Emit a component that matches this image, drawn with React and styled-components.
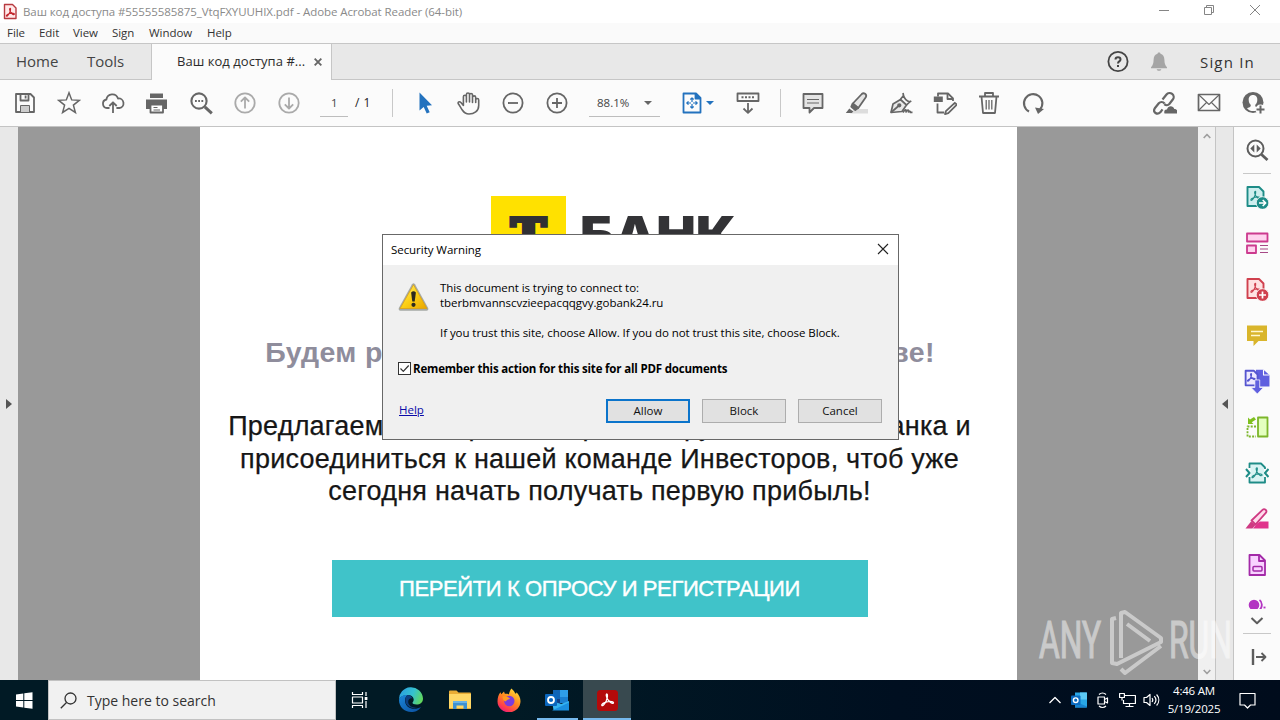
import React from "react";
import styled, { createGlobalStyle, css } from "styled-components";

const Global = createGlobalStyle`
  * { box-sizing: border-box; }
  body { margin: 0; overflow: hidden; background: #fff; }
`;

const Screen = styled.div`
  position: relative;
  display: flex;
  flex-direction: column;
  width: 1280px;
  height: 720px;
  overflow: hidden;
  font-family: "Open Sans", sans-serif;
  font-size: 11.5px;
  color: #222;
`;

/* ---------- window chrome ---------- */
const TitleBar = styled.header`
  display: flex;
  align-items: center;
  height: 23px;
  padding: 0 0 0 3px;
  background: #fff;
  color: #8a8a8a;
  white-space: nowrap;
`;
const TitleText = styled.span`
  flex: 1;
  margin-left: 6px;
  letter-spacing: -0.08px;
`;
const WindowControls = styled.div`
  display: flex;
  margin: 0 2px 3px 0;
  color: #858585;
`;
const WindowControl = styled.div`
  display: flex;
  align-items: center;
  justify-content: center;
  width: 45px;
  height: 20px;
  &:last-child { width: 47px; }
`;
const MenuBar = styled.nav`
  display: flex;
  align-items: center;
  height: 20px;
  padding-left: 7px;
  background: #fafafa;
  color: #333;
  line-height: 20px;
`;
const MenuItem = styled.span`
  width: ${(p) => p.$w}px;
  letter-spacing: -0.05px;
`;

/* ---------- tabs ---------- */
const TabBar = styled.div`
  display: flex;
  align-items: stretch;
  height: 37px;
  border-top: 1px solid #c6c6c6;
  border-bottom: 1px solid #c6c6c6;
  background: #e8e8e8;
  color: #444;
  font-size: 15px;
  line-height: 34px;
`;
const NavTab = styled.span`
  width: ${(p) => p.$w}px;
  padding-left: 16px;
`;
const DocumentTab = styled.div`
  display: flex;
  width: 181px;
  height: 36px;
  padding-left: 25px;
  border: solid #c6c6c6;
  border-width: 0 1px;
  background: #fbfbfb;
  color: #2c2c2c;
  font-size: 13px;
  line-height: 35px;
  white-space: nowrap;
`;
const TabLabel = styled.span`
  width: 137px;
  letter-spacing: 0.04px;
`;
const TabClose = styled.span`
  display: flex;
  align-items: center;
  justify-content: center;
  width: 8px;
`;
const TabActions = styled.div`
  display: flex;
  flex: 1;
  align-items: center;
  justify-content: flex-end;
  padding-right: 25px;
`;
const SignIn = styled.span`
  margin-left: 30px;
  color: #333;
  letter-spacing: 1.2px;
`;
const BellSlot = styled.div`
  display: flex;
  margin-left: 18px;
`;

/* ---------- toolbar ---------- */
const Toolbar = styled.div`
  display: flex;
  align-items: center;
  height: 47px;
  padding: 0 5px 0 3px;
  border-bottom: 1px solid #c4c4c4;
  background: #fbfbfb;
  color: #666;
`;
const ToolCell = styled.div`
  display: flex;
  align-items: center;
  justify-content: center;
  width: 44px;
  height: 46px;
  color: ${(p) => (p.$muted ? "#aaa" : p.$active ? "#2372be" : "inherit")};
`;
const FitCell = styled(ToolCell)`
  gap: 2px;
  width: 66px;
  padding-left: 7px;
`;
const Separator = styled.div`
  width: 1px;
  height: 28px;
  margin: 0 ${(p) => p.$right}px 0 ${(p) => p.$left}px;
  background: #c8c8c8;
`;
const Field = styled.div`
  display: flex;
  align-items: center;
  justify-content: space-between;
  width: ${(p) => p.$w}px;
  height: 28px;
  margin-left: ${(p) => p.$left || 0}px;
  padding: 0 ${(p) => p.$pad}px;
  border-bottom: 1px solid #bdbdbd;
  color: #444;
`;
const PageTotal = styled.span`
  width: 19px;
  margin: 0 0 2px 7px;
  color: #222;
  font-size: 12px;
  letter-spacing: 0.5px;
  white-space: nowrap;
`;
const Caret = styled.i`
  border: solid transparent;
  border-width: 4px 4px 0;
  border-top-color: ${(p) => p.$color || "#666"};
`;
const Spacer = styled.div`
  flex: 1;
`;

/* ---------- document area ---------- */
const Workspace = styled.main`
  display: flex;
  height: 553px;
`;
const Rail = styled.aside`
  display: flex;
  align-items: center;
  justify-content: center;
  width: 18px;
  background: #e8e8e8;
  ${(p) => p.$right && css`
    border-left: 1px solid #c4c4c4;
    border-right: 1px solid #c4c4c4;
    width: 19px;
  `}
`;
const RailArrow = styled.i`
  border: solid transparent;
  ${(p) => p.$left
    ? css`border-width: 5px 6px 5px 0; border-right-color: #555;`
    : css`border-width: 5px 0 5px 6px; border-left-color: #555;`}
`;
const Canvas = styled.section`
  display: flex;
  width: 1180px;
  padding-left: 181.5px;
  background: #999;
`;
const Page = styled.article`
  display: flex;
  flex-direction: column;
  align-items: center;
  width: 817px;
  padding-top: 69px;
  background: #fff;
  font-family: "Liberation Sans", sans-serif;
  white-space: nowrap;
`;
const BankLogo = styled.svg`
  display: block;
  margin-left: 11px;
`;
const Heading = styled.h1`
  margin: 64px 0 0;
  padding-right: 16px;
  color: #8f8d9c;
  font-size: 28.5px;
  font-weight: 700;
  line-height: 32px;
  letter-spacing: 0.32px;
`;
const Offer = styled.p`
  margin: 42px 0 0;
  padding-right: 17px;
  color: #161616;
  font-size: 27px;
  line-height: 32.5px;
  letter-spacing: 0.22px;
  text-align: center;
  -webkit-text-stroke: 0.25px #161616;
`;
const Loose = styled.span`
  word-spacing: 2.4px;
`;
const CallToAction = styled.div`
  width: 536px;
  height: 57px;
  margin: 52px 17px 0 0;
  background: #40c3c9;
  color: #fff;
  font-size: 22px;
  line-height: 57px;
  letter-spacing: -0.4px;
  text-align: center;
  -webkit-text-stroke: 0.4px #fff;
`;
const ScrollBar = styled.div`
  display: flex;
  flex-direction: column;
  justify-content: space-between;
  align-items: center;
  width: 17px;
  padding: 6px 0 5px;
  background: #f0f0f0;
  color: #a0a0a0;
`;
const ToolsPane = styled.aside`
  display: flex;
  flex-direction: column;
  align-items: center;
  width: 46px;
  background: #fbfbfb;
  color: #5d5d5d;
`;
const PaneItem = styled.div`
  display: flex;
  flex: none;
  align-items: center;
  justify-content: center;
  width: 46px;
  height: 46px;
`;
const PaneRule = styled.div`
  width: 28px;
  height: 1px;
  flex: none;
  background: #c8c8c8;
`;
/* Lower group of the tools pane: overflow hint, expander and collapse control. */
const PaneTail = styled.div`
  display: flex;
  flex-direction: column;
  align-items: center;
  margin-top: 11px;
  & > :nth-child(2) { margin-top: 8px; }
  & > :nth-child(3) { margin-top: 8px; }
  & > :nth-child(4) { margin: 15px 0 0 4px; }
`;

/* ---------- dialog ---------- */
const Dialog = styled.div`
  position: absolute;
  left: 382px;
  top: 234px;
  display: flex;
  flex-direction: column;
  width: 517px;
  height: 206px;
  border: 1px solid #686868;
  background: #f0f0f0;
  color: #000;
  white-space: nowrap;
`;
const DialogTitle = styled.div`
  display: flex;
  align-items: center;
  justify-content: space-between;
  height: 30px;
  padding: 0 9px 2px 8px;
  background: #fff;
  letter-spacing: -0.05px;
`;
const Message = styled.div`
  display: flex;
  gap: 11px;
  padding: 15px 0 0 15px;
  line-height: 15px;
  letter-spacing: -0.06px;
`;
const MessageText = styled.div`
  display: flex;
  flex-direction: column;
  gap: 15px;
`;
const Remember = styled.label`
  display: flex;
  align-items: center;
  gap: 2px;
  margin: 20px 0 0 15px;
  height: 16px;
  font-weight: 700;
  letter-spacing: -0.18px;
`;
const CheckBox = styled.span`
  display: flex;
  width: 13px;
  height: 13px;
  border: 1px solid #333;
  background: #fff;
`;
const DialogFooter = styled.div`
  display: flex;
  align-items: center;
  margin-top: 23px;
  padding: 0 16px;
`;
const HelpLink = styled.a`
  flex: 1;
  margin-top: -4px;
  color: #0a0aa8;
  text-decoration: underline;
`;
const Button = styled.button`
  width: 84px;
  height: 24px;
  margin-left: 12px;
  padding: 0 0 1px;
  border: ${(p) => (p.$primary ? "2px solid #0b74cb" : "1px solid #adadad")};
  background: #e1e1e1;
  color: #111;
  font: 11.5px "Open Sans", sans-serif;
`;

/* ---------- watermark ---------- */
const Watermark = styled.svg`
  position: absolute;
  left: 1030px;
  top: 604px;
  pointer-events: none;
`;

/* ---------- taskbar ---------- */
const TaskBar = styled.footer`
  display: flex;
  height: 40px;
  background: linear-gradient(90deg, #011a25 0%, #011a25 40%, #000f20 70%, #000c1c 100%);
  color: #fff;
`;
const StartButton = styled.div`
  display: flex;
  align-items: center;
  justify-content: center;
  width: 48px;
`;
const SearchBox = styled.div`
  display: flex;
  align-items: center;
  width: 288px;
  padding-left: 11px;
  border: 1px solid #c2c2c2;
  background: #f1f1f1;
  color: #333;
  font-size: 14px;
  gap: 10px;
`;
const TaskItem = styled.div`
  display: flex;
  align-items: center;
  justify-content: center;
  width: ${(p) => p.$w || 49}px;
  padding-top: 2px;
  border-bottom: 2px solid transparent;
  ${(p) => p.$running && css`border-bottom-color: #76b9ed;`}
  ${(p) => p.$active && css`background: #38494f;`}
`;
const Tray = styled.div`
  display: flex;
  flex: 1;
  align-items: center;
  justify-content: flex-end;
`;
const TrayItem = styled.div`
  display: flex;
  align-items: center;
  justify-content: center;
  width: 24px;
`;
const Clock = styled.time`
  width: 62px;
  text-align: center;
  line-height: 18px;
  font-size: 11.5px;
  letter-spacing: -0.2px;
`;
const Notifications = styled.div`
  display: flex;
  justify-content: center;
  width: 44px;
  height: 40px;
  align-items: center;
  margin-right: 11px;
`;

/* ---------- icons ---------- */
const Svg = styled.svg`
  display: block;
  flex: none;
  fill: none;
  stroke: currentColor;
  stroke-width: ${(p) => p.$sw || 1.8};
  stroke-linejoin: round;
`;
const Icon = ({ size = 24, sw, children, box = "0 0 24 24", h }) => (
  <Svg width={size} height={h || size} viewBox={box} $sw={sw}>{children}</Svg>
);

const SaveIcon = () => (
  <Icon>
    <path d="M3 3h14.5L21 6.5V21H3z" />
    <path d="M7.5 3v6.5h8V3" />
    <path d="M12.6 4.5v3" />
    <path d="M7.5 21v-6.5h9V21" fill="#ccc" strokeWidth="1" />
  </Icon>
);
const StarIcon = () => (
  <Icon sw={1.5}><path strokeLinejoin="miter" d="M12 1.8l2.7 7.1 7.6.4-5.9 4.8 2 7.4L12 17.3l-6.4 4.2 2-7.4-5.9-4.8 7.6-.4z" /></Icon>
);
const CloudIcon = () => (
  <Icon>
    <path d="M8.5 17H6a4.3 4.3 0 0 1-.6-8.5 6 6 0 0 1 11.6-1 4.8 4.8 0 0 1 1.4 9.5h-3" />
    <path d="M12 22V11.5M8.3 15l3.7-3.7 3.7 3.7" />
  </Icon>
);
const PrintIcon = () => (
  <Icon>
    <path d="M5 2.5h13V7H5z" fill="#666" stroke="none" />
    <path d="M1 8.5h21v9.500h-4V14H5v4H1z" fill="#666" stroke="none" />
    <path d="M5.500 13.500h12.500v8h-12.500z" fill="#fff" /><path d="M8.500 16.500h4M8.500 19h6.500" strokeWidth="1.1" />
  </Icon>
);
const FindIcon = () => (
  <Icon>
    <circle cx="10" cy="10" r="7.6" strokeWidth="2.100" />
    <path d="M15.8 15.8l7 6.5" strokeWidth="3" />
    <path d="M6 10h1.8M9.2 10H11M12.4 10h1.8" strokeWidth="1.8" />
  </Icon>
);
const ArrowCircle = ({ down }) => (
  <Icon>
    <circle cx="12" cy="12" r="9.7" />
    {down ? <path d="M12 6.5v11M7.8 13.3l4.2 4.2 4.2-4.2" /> : <path d="M12 17.5v-11M7.8 10.7L12 6.5l4.2 4.2" />}
  </Icon>
);
const CursorIcon = () => (
  <Icon><path d="M6.500 1.500v18l4.2-3.6 3 6.6 3-1.3-3-6.4 5.3-.5z" fill="#2372be" stroke="none" /></Icon>
);
const HandIcon = () => (
  <Icon sw={1.6}>
    <path strokeLinecap="round" d="M6.4 14.4V5.7a1.5 1.5 0 0 1 3 0V11M9.4 11V3.6a1.5 1.5 0 0 1 3.1 0V11M12.5 11V4a1.5 1.5 0 0 1 3 0v7.5M15.5 11.5V6.500M6.400 14.500l-2.500-3c-1.500-1.500-3.500-.3-2.600 1.300 1.200 1.500 2.500 4 4 6.200 1.400 2.200 3.200 4 6.700 4 5 0 9.700-2.700 9.700-8.500V9a1.500 1.500 0 0 0-3 0M15.500 6.500a1.600 1.600 0 0 1 3.200 0v5" />
  </Icon>
);
const ZoomCircle = ({ plus }) => (
  <Icon><circle cx="12" cy="12" r="9.6" /><path d={plus ? "M7 12h10M12 7v10" : "M7 12h10"} /></Icon>
);
const FitPageIcon = () => (
  <Icon>
    <path d="M3.5 2.5h12.500l4.500 4.500v14.500h-17z" />
    <path d="M15.500 2.500V7.500h5" fill="#2372be" />
    <path d="M12 7v10M7 12h10M10.300 8.500L12 6.800l1.700 1.700M10.300 15.500l1.700 1.700 1.700-1.700M8.500 10.300L6.800 12l1.700 1.700M15.500 10.300l1.700 1.700-1.700 1.700" strokeWidth="1.2" />
    <rect x="11" y="11" width="2" height="2" fill="#fbfbfb" stroke="none" />
  </Icon>
);
const ReadModeIcon = () => (
  <Icon>
    <path d="M1.500 2.500h21v7.500h-21z" />
    <path d="M5.500 6.300h13" strokeDasharray="2 1.5" strokeWidth="2" />
    <path d="M12 12v9.500M7.500 17.500l4.500 4.300 4.500-4.300" />
  </Icon>
);
const CommentIcon = () => (
  <Icon>
    <path d="M2.500 3h19v14H13l-4.500 4.500V17h-6z" fill="#e4e4e4" />
    <path d="M6 8.500h12M6 12h12" strokeWidth="1.2" />
  </Icon>
);
const HighlightIcon = () => (
  <Icon>
    <path d="M9 18h14v4.500H5z" fill="#ddd" stroke="none" />
    <path d="M7.800 12.500L16.800 3c2-2 5.500.5 4 3.200L13.300 17z" fill="#e4e4e4" />
    <path d="M7.600 12.700l5.500 4.400-2.800 1.900-4-3.300z" fill="#666" />
    <path d="M4.300 17.500l4 3-1.500 1.500H.8z" fill="#666" stroke="none" />
  </Icon>
);
const SignIcon = () => (
  <Icon sw={1.7}>
    <path d="M2 21.500l2-8.500 7.500-4.500 6 5.500-4.500 6.500z" fill="#e8e8e8" />
    <path d="M2 21.500l7.500-6.500" /><circle cx="10.300" cy="14.300" r="1.300" fill="#666" />
    <path d="M11.500 8.300l3-3.800-.5-2.500M17.500 14l3.300-3.200 1.500-.8M14.500 4.500c1 3.500 3 5.500 6.300 6.300" />
    <path d="M14 21.500c2-3.500 3.500-3.500 3-.5 1.500-2.500 3-2.500 2.500 0 1-1 2-1 2 .4h2" />
  </Icon>
);
const StampEditIcon = () => (
  <Icon>
    <path d="M5 5.500V2.500h10l5 4.800V10" /><path d="M14.500 2.500v5.500H20M4.500 12.500v9H11" />
    <path d="M.8 5.500h9v5.500h-9z" fill="#666" stroke="none" />
    <path d="M21.800 11.800l2 1.800-8.500 8.500-3.300 1 .9-3z" fill="#fff" />
  </Icon>
);
const TrashIcon = () => (
  <Icon>
    <path d="M2 5.500h20M8 5V2h8v3M4.500 5.500l1.500 16.500h12l1.500-16.500" />
    <path d="M9.200 9v9.500M12 9v9.500M14.800 9v9.500" strokeWidth="1.3" />
  </Icon>
);
const RotateIcon = () => (
  <Icon>
    <path d="M8 20.500A9.200 9.200 0 1 1 19 18.500" strokeWidth="2.1" />
    <path d="M14 16.500l9 1.500-6 5z" fill="#666" stroke="none" />
  </Icon>
);
const LinkCloudIcon = () => (
  <Icon>
    <path d="M9.500 8.500l4-5a4 4 0 0 1 6.300 5l-3.500 4.500c-1.300 1.400-3.500 1.500-5 .2M11.500 12.500c-1.500-2-4.200-1.900-5.700-.2l-4 5c-2.500 4 2.500 7.200 5.500 4l2.200-3" strokeWidth="2.200" />
    <path d="M11.500 22.500c-1-3 1-4.300 2.500-3.900 1-4.200 6.200-4.200 7.300-.6 3-.2 3.700 3 2.700 4.500z" fill="#666" stroke="none" />
  </Icon>
);
const MailIcon = () => (
  <Icon sw={1.7}><path d="M1.500 3.500h21v16h-21z" /><path d="M1.500 3.500L12 13.500 22.500 3.500M1.500 19.500l8-8M22.500 19.500l-8-8" strokeWidth="1.1" /></Icon>
);
const AddUserIcon = () => (
  <Icon>
    <circle cx="12" cy="11.500" r="10.500" fill="#666" stroke="none" />
    <path d="M12 4c3 0 4.500 2.200 4.300 5-.1 2.500-1 3.800-2 4.700-.3 2 .5 2.300 3.700 3.500-2.500 3.800-9 3.800-12 0 3.200-1.200 4-1.500 3.700-3.500-1-.9-1.900-2.200-2-4.700C7.500 6.200 9 4 12 4z" fill="#fbfbfb" stroke="none" />
    <circle cx="19.500" cy="18.500" r="5" fill="#fbfbfb" stroke="none" />
    <path d="M19.500 14.500v8M15.500 18.500h8" strokeWidth="2" />
  </Icon>
);
const HelpIcon = () => (
  <Icon>
    <circle cx="12" cy="11.500" r="9.600" />
    <path d="M9.500 9.500c0-3 5-3 5 0 0 2-2.500 1.800-2.500 3.900M12 15v2" strokeWidth="2" />
  </Icon>
);
const BellIcon = () => (
  <Icon size={22}>
    <path d="M12 1.500c1 0 1.500.5 1.600 1.600 2.800.9 4.200 3 4.300 6.500.1 4 .7 6 2.800 8v1.200H3.300v-1.200c2.100-2 2.700-4 2.800-8C6.200 6.100 7.600 4 10.400 3.100 10.500 2 11 1.500 12 1.500z" fill="#a5a5a5" stroke="none" />
    <path d="M9.500 19.800h5c-.3 2.500-4.700 2.500-5 0z" fill="#a5a5a5" stroke="none" />
  </Icon>
);

const Trefoil = ({ x = 0, y = 0, k = 1, color }) => (
  <path transform={`translate(${x} ${y}) scale(${k})`} stroke={color} strokeWidth={1.1 / k}
    d="M6 1c-1.500 0-.8 3 .4 4.800C7.800 8 10 9.500 11 8.600 12 7.300 8 6.600 5.400 7.400 3 8.200.6 9.600 1 10.700c.6 1 2.900-1.400 4-4C6 4.500 7 1.300 6 1z" />
);
const AcrobatFile = () => (
  <Icon size={14} h={17} box="0 0 14 17" sw={1.4}>
    <path d="M1.500 1.500h8l3.500 3.500V15.500h-11.500z" stroke="#b73a40" fill="#ffe9e9" />
    <Trefoil x={2.5} y={4.5} k={0.8} color="#c2252c" />
  </Icon>
);
const PaneDoc = ({ color, fill }) => (
  <>
    <path d="M2.500 2h11.500l4.500 4.500V21H2.500z" stroke={color} fill={fill} strokeWidth="1.9" />
    <Trefoil x={5} y={5.5} k={0.9} color={color} />
  </>
);
const ExportPdf = () => (
  <Icon>
    <PaneDoc color="#1d8c87" fill="#cdeeee" />
    <circle cx="17.500" cy="18" r="6.300" fill="#1d8c87" stroke="#fbfbfb" strokeWidth=".8" />
    <path d="M14 18h6.500M17.700 15l3 3-3 3" stroke="#fff" strokeWidth="1.6" />
  </Icon>
);
const Organize = () => (
  <Icon>
    <path d="M2 2.500h20.500v8H2zM2 14.500h9v7.500H2z" stroke="#cc3a8e" fill="#ffd3ee" />
    <path d="M15 14.500h8M15 18h8M15 21.500h8" stroke="#a64886" strokeWidth="1.2" />
  </Icon>
);
const CreatePdf = () => (
  <Icon>
    <PaneDoc color="#d0404e" fill="#ffe1e1" />
    <circle cx="17.500" cy="18" r="6.300" fill="#d0404e" stroke="#fbfbfb" strokeWidth=".8" />
    <path d="M14 18h7M17.500 14.500v7" stroke="#fff" strokeWidth="1.7" />
  </Icon>
);
const PaneComment = () => (
  <Icon><path d="M2 2.500h20v15.500H13.500L8.500 23v-5H2z" fill="#d9b52b" stroke="none" /><path d="M6 8.500h12M6 12.500h9" stroke="#fff8cf" strokeWidth="1.7" /></Icon>
);
const Combine = () => (
  <Icon size={26}>
    <path d="M11 1.500h7l5.500 5V17h-12.500z" fill="#6060df" stroke="none" /><path d="M18 1.500V6.500h5.500" stroke="#fff" strokeWidth="1" />
    <path d="M1.500 2.500H9l3.500 3.500V16h-11z" stroke="#5555cf" fill="#eeeaff" strokeWidth="1.7" />
    <Trefoil x={2.5} y={4.5} k={0.7} color="#5555cf" />
    <path d="M10 11h4.500v7H18l-5.700 6L6.500 18H10z" fill="#6060df" stroke="#fbfbfb" strokeWidth=".7" />
  </Icon>
);
const Compress = () => (
  <Icon>
    <path d="M13 2.500h9.500v19H13z" stroke="#7cb62b" fill="#e4ffc0" />
    <path d="M11 11.500H2.500v10H11" stroke="#7cb62b" strokeDasharray="2 1.3" />
    <path d="M3 2.500l2 2L9 2l2 2.500-4.300 2.700 1.800 1.800H3z" fill="#7fc01f" stroke="none" />
  </Icon>
);
const CompressPdf = () => (
  <Icon>
    <path d="M5.500 3.500h10l3.500 4v13h-13.500z" fill="#d8f3f3" stroke="none" />
    <path d="M4.500 7V2.500h11.500l4 4V8M20 16v5.500H4.500V16" stroke="#1d8c87" />
    <Trefoil x={6} y={5.8} k={1} color="#1d8c87" />
    <path d="M1 8l3.500 4L1 16M23.500 8L20 12l3.500 4" stroke="#1d8c87" strokeWidth="2" />
  </Icon>
);
const Redact = () => (
  <Icon>
    <path d="M12 16.500L15 14.500h8.500V21.500H8z" fill="#e0348c" stroke="none" />
    <path d="M6.500 13.500L17.500 2.800c2-1.800 5 .5 3.500 2.900L10.500 17.500z" stroke="#cf3a83" fill="#ffdcec" />
    <path d="M6 14.500l4.500 3.500-3 3.500H.5z" fill="#cf3a83" stroke="none" />
  </Icon>
);
const Forms = () => (
  <Icon>
    <path d="M4.500 2h10L20 7.500V22H4.500z" stroke="#a32aa8" fill="#f8d2ff" />
    <path d="M14 2v6h6" stroke="#a32aa8" /><rect x="8" y="13.500" width="9" height="4.500" rx="1" stroke="#a32aa8" strokeWidth="1.5" />
  </Icon>
);
const MoreTools = () => (
  <Icon h={10} box="0 0 24 10">
    <circle cx="9" cy="6" r="5.300" fill="#b334c2" stroke="none" />
    <path d="M14.500 1c3 2 3 7 .5 9.500" stroke="#b334c2" /><path d="M18.500 8.500h2" stroke="#b334c2" />
  </Icon>
);

const WarningIcon = () => (
  <svg width="31" height="32" viewBox="0 -1 31 32">
    <defs>
      <linearGradient id="amber" x1="0" y1="0" x2="1" y2="1">
        <stop offset="0" stopColor="#fff27a" /><stop offset=".5" stopColor="#fdd015" /><stop offset="1" stopColor="#e8a500" />
      </linearGradient>
    </defs>
    <path d="M14 3.300Q15.500 1.200 17 3.300L30.200 27Q30.800 29.700 28.500 29.700H2.500Q.2 29.700.8 27z" fill="#a5a9a5" />
    <path d="M15.500 3.800L28.900 27.500H2.100z" fill="url(#amber)" stroke="#dfa20c" strokeWidth=".8" />
    <path d="M13.100 11.500q2.400-2.300 4.800 0L16.700 20.500h-2.400z" fill="#2d2a20" />
    <circle cx="15.500" cy="23.800" r="2.100" fill="#2d2a20" />
  </svg>
);

const TaskView = () => (
  <Icon size={18} box="0 0 18 18" sw={1.2}>
    <path d="M1.500 1v2.500h10V1M1.500 17v-2.500h10V17M1.500 6h10v6h-10zM15 1v4M15 10v7" /><path d="M13.700 6h2.700v3h-2.700z" fill="#fff" stroke="none" />
  </Icon>
);
const Edge = () => (
  <svg width="26" height="26" viewBox="0 0 26 26">
    <defs>
      <linearGradient id="edgeTop" x1="0" y1=".3" x2="1" y2=".6"><stop offset="0" stopColor="#2a9fe0" /><stop offset=".55" stopColor="#35c1cf" /><stop offset="1" stopColor="#62d85b" /></linearGradient>
      <linearGradient id="edgeLow" x1="0" y1="0" x2="1" y2="1"><stop offset="0" stopColor="#1b86d8" /><stop offset="1" stopColor="#0b4f9e" /></linearGradient>
    </defs>
    <path d="M1 13A12 12 0 0 1 25 11.500c0 4-3 6-6.500 6-2.500 0-4-.8-4-1.700 0-.8 1.200-1.200 1.200-3.300C15.500 9 12 7.800 9 8 5 8.300 1.800 10 1 13z" fill="url(#edgeTop)" />
    <path d="M1 13C2 9 6 7.500 9.500 8c-3 2-3.500 8 0 11.500 3.500 3 9.500 3 13.500.5C20.500 24 17 25 13.500 25 6 25 1 19.500 1 13z" fill="url(#edgeLow)" />
    <path d="M9.500 8c2.500.2 4.500 1.500 5 3.500-2-1-4.500.5-4.300 3.500.3 4 4.800 6.500 9.800 5.500-4 1.500-10 .5-12-4C6.700 13 7.500 9.500 9.500 8z" fill="#0d3f80" />
  </svg>
);
const Explorer = () => (
  <svg width="22" height="20" viewBox="0 0 22 20">
    <path d="M0 1.500Q0 .5 1 .5h6.500l2 2H21q1 0 1 1V19H0z" fill="#e9ad35" />
    <path d="M0 4h22v14H0z" fill="#ffd866" /><path d="M4 11h14v8h-3.500v-3.500h-7V19H4z" fill="#3d91d2" /><path d="M4 11h14v2H4z" fill="#69b3e6" />
  </svg>
);
const Firefox = () => (
  <svg width="24" height="24" viewBox="0 0 24 24">
    <defs><linearGradient id="fox" x1=".8" y1="0" x2=".2" y2="1"><stop offset="0" stopColor="#ffe03b" /><stop offset=".45" stopColor="#ff8a1e" /><stop offset=".8" stopColor="#ff3b4e" /><stop offset="1" stopColor="#e31587" /></linearGradient></defs>
    <path d="M14.500.5c1.500 1.500 3 3 3.700 5 1 .2 1.300-.5 1.300-1.300 2.500 2.500 4 5.500 4 9A11.500 11 0 0 1 .5 13.500c0-4 1-7 3-9.300l.8 2L7 3.500l.8 2.200c2 .2 3-.2 4 .8C12.500 4 13 2 14.500.5z" fill="url(#fox)" />
    <circle cx="12.300" cy="13" r="5.200" fill="#7a3bdd" /><path d="M5.500 8.500c3-1 6.500.5 7.500 2.500-2 .2-3 1-4.500 2.500-2-.5-3-2.500-3-5z" fill="#ff9a20" />
  </svg>
);
const Outlook = () => (
  <svg width="25" height="22" viewBox="0 0 25 22">
    <path d="M8 1h7v9H8z" fill="#0f64b5" /><path d="M15 1h8v9h-8z" fill="#2f9ee8" /><path d="M8 10h7.500v8H8z" fill="#123f86" />
    <path d="M15 8h8v6h-8z" fill="#1b7fd0" /><path d="M7 12l9 3 8-3v9H8.500z" fill="#35b3f0" /><path d="M7 21.500l17-8v8z" fill="#1a8fdf" />
    <rect y="5" width="12" height="12" rx="1" fill="#0a66bd" /><circle cx="6" cy="11" r="3" fill="none" stroke="#fff" strokeWidth="1.8" />
  </svg>
);
const OutlookTray = () => (
  <svg width="16" height="16" viewBox="0 0 16 15">
    <path d="M4 0h11q1 0 1 1v13q0 1-1 1H4z" fill="#29a6e5" /><path d="M9 0h7v7H9z" fill="#5cc9f5" /><path d="M4 9l12 5v1H4z" fill="#1783cf" />
    <rect y="3" width="9.500" height="9.500" rx="1" fill="#0a6abf" /><circle cx="4.700" cy="7.700" r="2.300" fill="none" stroke="#fff" strokeWidth="1.4" />
  </svg>
);
const AcrobatApp = () => (
  <svg width="21" height="21" viewBox="0 0 21 21" fill="none">
    <rect width="21" height="21" rx="3.500" fill="#b40a0a" />
    <path d="M10 4c-1.300 0-.7 3 .5 5 1.600 2.800 4.500 5 5.800 4.200C17.500 11.500 13 11 9.800 11.800c-2.700.8-5.600 2.300-5 3.600.8 1.200 3.300-1.800 4.500-4.700C10.400 7.800 11 4.300 10 4z" stroke="#fff" strokeWidth="1.3" />
  </svg>
);
const Cross = ({ size, sw = 1, color }) => (
  <Icon size={size} box="0 0 12 12" sw={sw}><path d="M1 1l10 10M11 1L1 11" stroke={color || "currentColor"} /></Icon>
);

const FileTools = [SaveIcon, StarIcon, CloudIcon, PrintIcon, FindIcon];
const EditTools = [CommentIcon, HighlightIcon, SignIcon, StampEditIcon, TrashIcon, RotateIcon];
const ShareTools = [LinkCloudIcon, MailIcon, AddUserIcon];
const PaneTools = [ExportPdf, Organize, CreatePdf, PaneComment, Combine, Compress, CompressPdf, Redact, Forms];
const Menus = [["File", 32], ["Edit", 34], ["View", 39], ["Sign", 37], ["Window", 58], ["Help", 30]];

export default function App() {
  return (
    <Screen>
      <Global />
      <TitleBar>
        <AcrobatFile />
        <TitleText>Ваш код доступа #55555585875_VtqFXYUUHIX.pdf - Adobe Acrobat Reader (64-bit)</TitleText>
        <WindowControls>
          <WindowControl><Icon size={10} box="0 0 10 10" sw={1}><path d="M0 5.500h10" /></Icon></WindowControl>
          <WindowControl><Icon size={10} box="0 0 10 10" sw={1}><path d="M.5 2.500h7v7h-7zM2.500 2.500v-2h7v7h-2" /></Icon></WindowControl>
          <WindowControl><Cross size={12} /></WindowControl>
        </WindowControls>
      </TitleBar>
      <MenuBar>{Menus.map(([m, w]) => <MenuItem key={m} $w={w}>{m}</MenuItem>)}</MenuBar>
      <TabBar>
        <NavTab $w={71}>Home</NavTab>
        <NavTab $w={80}>Tools</NavTab>
        <DocumentTab>
          <TabLabel>Ваш код доступа #...</TabLabel>
          <TabClose><Cross size={8} sw={2.8} color="#666" /></TabClose>
        </DocumentTab>
        <TabActions>
          <HelpIcon />
          <BellSlot><BellIcon /></BellSlot>
          <SignIn>Sign In</SignIn>
        </TabActions>
      </TabBar>
      <Toolbar>
        {FileTools.map((I, i) => <ToolCell key={i}><I /></ToolCell>)}
        <ToolCell $muted><ArrowCircle /></ToolCell>
        <ToolCell $muted><ArrowCircle down /></ToolCell>
        <Field $w={28} $pad={11} $left={9}>1</Field>
        <PageTotal>/ 1</PageTotal>
        <Separator $left={18} $right={10} />
        <ToolCell $active><CursorIcon /></ToolCell>
        <ToolCell><HandIcon /></ToolCell>
        <ToolCell><ZoomCircle /></ToolCell>
        <ToolCell><ZoomCircle plus /></ToolCell>
        <Field $w={71} $pad={8} $left={10}>88.1%<Caret /></Field>
        <FitCell $active><FitPageIcon /><Caret $color="#2372be" /></FitCell>
        <ToolCell><ReadModeIcon /></ToolCell>
        <Separator $left={10} $right={10} />
        {EditTools.map((I, i) => <ToolCell key={i}><I /></ToolCell>)}
        <Spacer />
        {ShareTools.map((I, i) => <ToolCell key={i}><I /></ToolCell>)}
      </Toolbar>
      <Workspace>
        <Rail><RailArrow /></Rail>
        <Canvas>
          <Page>
            <BankLogo width="246" height="76" viewBox="0 0 246 76">
              <rect width="75" height="75" fill="#ffe100" />
              <text x="20" y="53" fontFamily="DejaVu Serif" fontWeight="700" fontSize="43" textLength="35" lengthAdjust="spacingAndGlyphs" fill="#303034" stroke="#303034" strokeWidth="4">Т</text>
              <text x="89" y="55" fontFamily="Inter" fontWeight="900" fontSize="48" textLength="156" lengthAdjust="spacingAndGlyphs" fill="#333336">БАНК</text>
            </BankLogo>
            <Heading>Будем рады видеть Вас в нашем сообществе!</Heading>
            <Offer>
              Предлагаем <Loose>Вам пройти опрос от группы нашего </Loose>банка и<br />
              присоединиться к нашей команде Инвесторов, чтоб уже<br />
              сегодня начать получать первую прибыль!
            </Offer>
            <CallToAction>ПЕРЕЙТИ К ОПРОСУ И РЕГИСТРАЦИИ</CallToAction>
          </Page>
        </Canvas>
        <ScrollBar>
          <Icon size={8} h={6} box="0 0 8 6" sw={1.7}><path d="M.7 5L4 1.500 7.300 5" /></Icon>
          <Icon size={8} h={6} box="0 0 8 6" sw={1.7}><path d="M.7 1L4 4.500 7.300 1" /></Icon>
        </ScrollBar>
        <Rail $right><RailArrow $left /></Rail>
        <ToolsPane>
          <PaneItem>
            <Icon>
              <circle cx="10.500" cy="10.500" r="8" strokeWidth="2" /><path d="M16.500 16.500l6 5.500" strokeWidth="2.8" />
              <path d="M9.300 6.500v8L5.300 10.500zM11.700 6.500v8l4-4z" fill="#5d5d5d" stroke="none" />
            </Icon>
          </PaneItem>
          <PaneRule />
          {PaneTools.map((I, i) => <PaneItem key={i}><I /></PaneItem>)}
          <PaneTail>
            <MoreTools />
            <Icon size={14} h={8} box="0 0 14 8" sw={2}><path d="M1.500 1L7 6.300 12.500 1" /></Icon>
            <PaneRule />
            <Icon size={16} box="0 0 16 16" sw={1.8}><path d="M2 0v16" strokeWidth="2.4" /><path d="M5 8h9M10.500 4L14.500 8l-4 4" /></Icon>
          </PaneTail>
        </ToolsPane>
      </Workspace>
      <TaskBar>
        <StartButton>
          <svg width="17" height="17" viewBox="0 0 17 17" fill="#fff"><path d="M0 2.500l7.300-1V8H0zM8.300 1.300L16.500.2V8H8.300zM0 9h7.300v6.500l-7.300-1zM8.300 9h8.200v7.800l-8.200-1.100z" /></svg>
        </StartButton>
        <SearchBox>
          <Icon size={17} box="0 0 17 17" sw={1.3}><circle cx="10.500" cy="6.500" r="5.500" /><path d="M6.500 10.500L.8 16.200" /></Icon>
          Type here to search
        </SearchBox>
        <TaskItem $w={48}><TaskView /></TaskItem>
        <TaskItem $w={54}><Edge /></TaskItem>
        <TaskItem $w={43}><Explorer /></TaskItem>
        <TaskItem $w={56}><Firefox /></TaskItem>
        <TaskItem $w={41} $running><Outlook /></TaskItem>
        <TaskItem $w={5} />
        <TaskItem $w={48} $running $active><AcrobatApp /></TaskItem>
        <Tray>
          <TrayItem><Icon size={12} h={8} box="0 0 12 8" sw={1.3}><path d="M.5 7L6 1.500 11.500 7" /></Icon></TrayItem>
          <TrayItem><OutlookTray /></TrayItem>
          <TrayItem><Icon size={16} box="0 0 16 16" sw={1.2}><path d="M3 5h6.500v7H3zM9.500 7.500L12.500 6v5l-3-1.500M4 2.500c2-1.800 5-1.800 7 0M4 14c2 1.800 5 1.800 7 0" /></Icon></TrayItem>
          <TrayItem><Icon size={17} h={16} box="0 0 17 16" sw={1.2}><path d="M6 3.500h10.400v8H4.500V8M10.500 11.500v3M6.500 14.500h8M.6 1.500h4.800v4H.6zM3 5.500v3" /></Icon></TrayItem>
          <TrayItem><Icon size={17} h={14} box="0 0 17 14" sw={1.2}><path d="M1 4.500h2.500L7 1.500v11l-3.500-3H1zM9 5c1 1.300 1 2.700 0 4M11.300 3.200c2 2.300 2 5.300 0 7.600M13.600 1.500c2.900 3.300 2.900 7.700 0 11" /></Icon></TrayItem>
          <Clock>4:46 AM<br />5/19/2025</Clock>
          <Notifications><Icon size={17} box="0 0 17 17" sw={1.2}><path d="M1 1.500h15v11.500h-4.500l-3 3-3-3H1z" /></Icon></Notifications>
        </Tray>
      </TaskBar>

      <Watermark width="206" height="72" viewBox="0 0 206 72" fill="none" stroke="#fff" opacity=".48">
        <g fill="#fff" strokeWidth="1.2" fontFamily="Roboto" fontWeight="400" fontSize="51">
          <text x="9" y="54" textLength="62" lengthAdjust="spacingAndGlyphs">ANY</text>
          <text x="139" y="54" textLength="63" lengthAdjust="spacingAndGlyphs">RUN</text>
        </g>
        <path strokeWidth="4" strokeLinejoin="round" d="M86 14l-4 1v44l5 1L131 38v-4L95 8l-4 1v45M97 20l23 17M91 65l4 4 36-27" />
      </Watermark>

      <Dialog>
        <DialogTitle>
          <span>Security Warning</span>
          <Cross size={12} sw={1.1} color="#222" />
        </DialogTitle>
        <Message>
          <WarningIcon />
          <MessageText>
            <div>This document is trying to connect to:<br />tberbmvannscvzieepacqqgvy.gobank24.ru</div>
            <div>If you trust this site, choose Allow. If you do not trust this site, choose Block.</div>
          </MessageText>
        </Message>
        <Remember>
          <CheckBox><Icon size={11} box="0 0 11 11" sw={1.2}><path d="M1.500 5.500L4.300 8.300 9.700 2.500" stroke="#333" /></Icon></CheckBox>
          Remember this action for this site for all PDF documents
        </Remember>
        <DialogFooter>
          <HelpLink>Help</HelpLink>
          <Button $primary>Allow</Button>
          <Button>Block</Button>
          <Button>Cancel</Button>
        </DialogFooter>
      </Dialog>
    </Screen>
  );
}
